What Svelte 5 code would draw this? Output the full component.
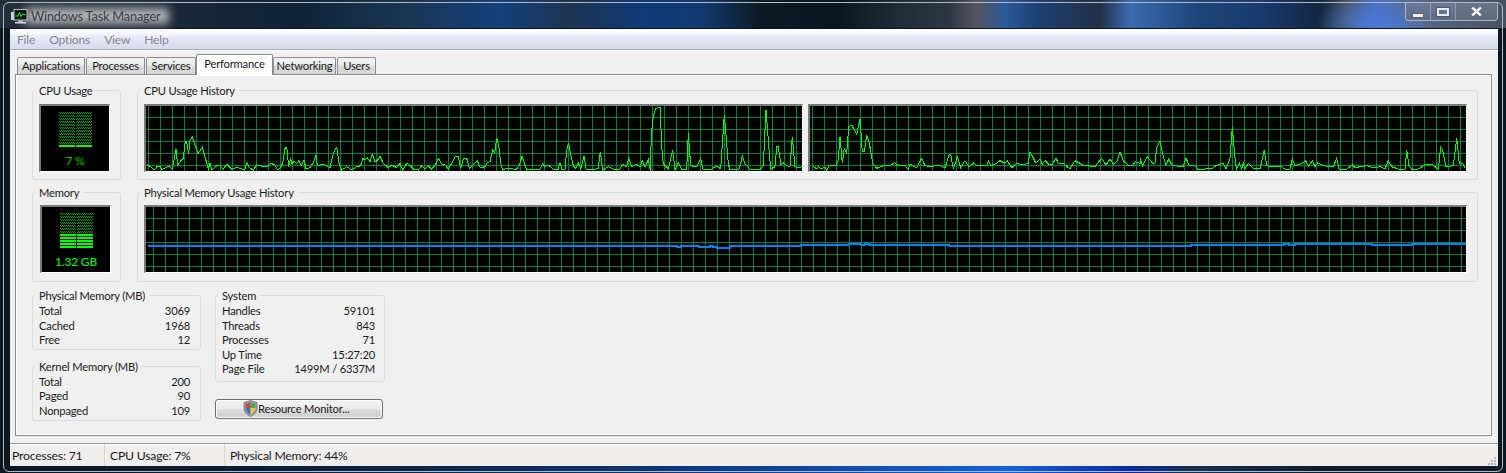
<script>
  // traces read off the reference, [zoomX, zoomY] at 3x, per crop offset
  const toLine = (crops, ox, oy) =>
    crops
      .flatMap(([off, pts]) =>
        pts.map(([x, y]) => `${(off + x / 3 - ox).toFixed(1)},${(95 + y / 3 - oy).toFixed(1)}`)
      )
      .join(" ");

  const cpu1 = [
    [140, [[22,208],[30,214],[42,225],[52,214],[60,214],[66,224],[78,218],[88,213],[96,222],[100,205],[108,163],[113,210],[120,200],[130,190],[136,140],[140,140],[146,176],[150,135],[157,127],[165,150],[175,175],[187,157],[195,185],[205,222],[210,205],[216,225],[230,212],[240,212],[250,222],[260,208],[275,222],[290,217],[305,222],[315,222],[320,203],[328,218],[340,225],[350,210],[370,215],[385,213],[392,205],[405,210],[412,225],[420,220],[428,205],[435,160],[440,157],[446,215],[452,190],[456,208],[462,198],[470,206],[476,197],[484,210],[492,195],[498,222],[510,218],[520,203],[528,180],[532,212],[548,208],[560,212],[570,218],[580,175],[590,157],[597,205],[605,225],[620,215],[635,225],[650,215],[662,212],[668,190],[675,195],[682,188],[690,200],[697,177],[705,200],[712,197],[720,184],[730,205],[745,218],[755,210],[770,218],[780,205],[788,225],[800,205],[808,210],[820,222],[835,225],[845,212],[855,222],[865,212],[875,222],[885,212],[895,190],[905,207],[915,210],[925,222],[935,205],[945,185],[955,185],[962,220],[970,192],[980,190],[988,220],[1000,210],[1012,198],[1020,215]]],
    [480, [[0,218],[15,215],[20,205],[30,200],[38,165],[44,175],[50,130],[56,150],[62,205],[68,225],[80,220],[100,222],[110,222],[118,212],[126,183],[132,200],[140,225],[160,222],[180,222],[188,207],[195,215],[205,210],[220,222],[235,222],[240,203],[246,225],[255,222],[260,165],[266,143],[272,180],[280,212],[288,220],[295,203],[302,222],[312,182],[318,222],[340,225],[355,220],[361,170],[368,225],[385,215],[400,222],[420,222],[427,208],[440,215],[446,190],[455,215],[470,208],[480,215],[487,197],[495,215],[505,195],[511,227],[514,120],[520,65],[527,40],[540,37],[546,165],[550,207],[565,222],[578,165],[585,225],[595,203],[605,222],[620,222],[625,115],[632,212],[650,215],[662,190],[668,222],[680,225],[695,222],[710,213],[722,222],[733,60],[738,120],[745,207],[750,225],[778,222],[787,183],[795,208],[810,222],[830,225],[842,222],[850,212],[858,45],[866,150],[872,222],[885,215],[890,155],[895,155],[903,210],[912,203],[920,212],[930,215],[937,125],[945,215],[955,218],[965,215]]]
  ];

  const cpu2 = [
    [800, [[38,212],[50,222],[55,215],[65,222],[75,216],[80,225],[88,212],[108,212],[115,195],[120,125],[127,205],[133,160],[140,175],[146,95],[155,90],[170,118],[180,72],[187,170],[193,170],[200,120],[208,145],[218,205],[230,220],[250,212],[270,212],[283,203],[295,212],[315,212],[325,222],[330,208],[350,218],[365,190],[375,212],[395,215],[415,210],[435,218],[447,180],[452,178],[460,222],[472,185],[482,218],[495,197],[507,215],[522,203],[530,212],[560,213],[565,197],[572,212],[590,205],[600,197],[615,205],[622,197],[635,218],[650,205],[665,210],[685,205],[690,170],[708,205],[720,192],[727,208],[735,197],[745,207],[757,207],[768,190],[775,205],[790,205],[810,222],[825,197],[840,205],[850,212],[865,212],[885,215],[905,190],[918,210],[930,192],[940,208],[950,200],[960,170],[970,198],[985,210],[1000,210],[1005,200],[1020,205]]],
    [1140, [[0,190],[8,212],[22,185],[38,205],[45,205],[50,158],[60,138],[70,185],[78,210],[86,192],[95,210],[110,213],[130,213],[138,190],[148,212],[165,212],[173,222],[195,222],[218,220],[228,212],[250,205],[258,222],[270,190],[277,97],[285,190],[290,222],[298,205],[305,222],[310,205],[315,222],[325,205],[340,220],[360,222],[373,165],[380,212],[395,215],[420,213],[435,222],[450,222],[457,192],[465,212],[485,205],[497,197],[505,215],[517,197],[525,215],[533,203],[550,212],[580,215],[590,190],[597,222],[620,222],[637,210],[645,218],[660,215],[680,212],[700,218],[720,215],[735,222],[745,197],[755,215],[775,222],[795,222],[800,165],[807,212],[815,222],[835,222],[855,210],[875,207],[885,215],[895,222],[902,157],[908,165],[918,215],[940,212],[950,130],[958,205],[968,205],[975,220]]]
  ];

  // physical memory: [x where the step ends, y]
  const memSteps = [[677,246],[681,247],[699,246],[710,247],[713,246],[717,247],[730,248],[801,246],[849,245],[861,244],[865,245],[869,244],[949,245],[1191,246],[1284,245],[1289,244],[1295,245],[1372,244],[1412,245],[1466,244]];
  let memLine = "2,140";
  {
    let pts = [[148, 246]];
    for (const [x, y] of memSteps) {
      pts.push([pts[pts.length - 1][0], y], [x, y]);
    }
    memLine = pts.map(([x, y]) => `${x - 146},${y - 207}`).join(" ");
  }

  const range = (from, to, step) => {
    const out = [];
    for (let v = from; v < to; v += step) out.push(v);
    return out;
  };

  const physical = [["Total", "3069"], ["Cached", "1968"], ["Free", "12"]];
  const kernel = [["Total", "200"], ["Paged", "90"], ["Nonpaged", "109"]];
  const system = [
    ["Handles", "59101"],
    ["Threads", "843"],
    ["Processes", "71"],
    ["Up Time", "15:27:20"],
    ["Page File", "1499M / 6337M"]
  ];
  const tabs = ["Applications", "Processes", "Services", "Performance", "Networking", "Users"];
  const menus = ["File", "Options", "View", "Help"];
</script>

{#snippet graph(w, h, gx, gy, children)}
  <div class="graph">
    <svg width={w} height={h} viewBox="0 0 {w} {h}" shape-rendering="crispEdges">
      <rect width={w} height={h} fill="#000" />
      {#each range(gx, w, 12) as x}
        <rect {x} y="0" width="1" height={h} fill="#008040" />
      {/each}
      {#each range(gy, h, 12) as y}
        <rect x="0" {y} width={w} height="1" fill="#008040" />
      {/each}
      {@render children()}
    </svg>
  </div>
{/snippet}

{#snippet meter(stripes, label, bright)}
  <div class="meter">
    <svg width="33" height="35" viewBox="0 0 33 35" shape-rendering="crispEdges">
      <defs>
        <pattern id="dots" width="2" height="3" patternUnits="userSpaceOnUse">
          <rect x="0" y="0" width="1" height="1" fill="#00a800" />
          <rect x="1" y="1" width="1" height="1" fill="#00a800" />
        </pattern>
      </defs>
      <rect x="0" y="0" width="16" height={35 - stripes * 3} fill="url(#dots)" />
      <rect x="17" y="0" width="16" height={35 - stripes * 3} fill="url(#dots)" />
      {#each range(0, stripes, 1) as i}
        <rect x="0" y={33 - i * 3} width="16" height="2" fill="#00ff00" />
        <rect x="17" y={33 - i * 3} width="16" height="2" fill="#00ff00" />
      {/each}
    </svg>
    <span class="meter-label" class:bright>{label}</span>
  </div>
{/snippet}

{#snippet stats(rows)}
  {#each rows as [name, value]}
    <div class="stat"><span>{name}</span><span>{value}</span></div>
  {/each}
{/snippet}

{#snippet cpuGraph()}
  <polyline points={toLine(cpu1, 146, 106)} fill="none" stroke="#00ff00" />
{/snippet}
{#snippet cpuGraph2()}
  <polyline points={toLine(cpu2, 810, 106)} fill="none" stroke="#00ff00" />
{/snippet}
{#snippet memGraph()}
  <polyline points={memLine} fill="none" stroke="#0080ff" stroke-width="2" />
{/snippet}

<div class="desktop">
  <div class="frame">
    <div class="titlebar">
      <div class="title">
        <svg width="17" height="15" viewBox="0 0 17 15">
          <rect x="0" y="3" width="3" height="8" fill="#cfd3d6" />
          <rect x="3" y="0.5" width="13" height="10.5" fill="#0c1a12" stroke="#b9bdc0" />
          <path d="M4.5 7 L7 7 L8.5 3.5 L10 7.5 L11.5 5 L14.5 6" fill="none" stroke="#35e04a" />
          <rect x="7" y="11" width="5" height="2" fill="#a9adb0" />
          <rect x="4" y="13" width="11" height="1.5" fill="#d7dadc" />
        </svg>
        <span>Windows Task Manager</span>
      </div>
      <div class="caption">
        <button class="cap min" aria-label="Minimize"><i></i></button>
        <button class="cap max" aria-label="Maximize"><i></i></button>
        <button class="cap close" aria-label="Close">
          <svg width="11" height="9" viewBox="0 0 11 9">
            <path d="M1.2 0.5 L9.8 8.5 M9.8 0.5 L1.2 8.5" stroke="#f2f4f6" stroke-width="2.4" fill="none" />
          </svg>
        </button>
      </div>
    </div>

    <div class="client">
      <div class="menubar">
        {#each menus as m}<span>{m}</span>{/each}
      </div>

      <div class="tabs">
        {#each tabs as t}
          <div class="tab" class:active={t === "Performance"}>{t}</div>
        {/each}
      </div>

      <div class="panel">
        <div class="row">
          <div class="group small">
            <div class="legend">CPU Usage</div>
            {@render meter(1, "7 %", false)}
          </div>
          <div class="group wide">
            <div class="legend">CPU Usage History</div>
            <div class="graphs">
              {@render graph(656, 65, 2, 11, cpuGraph)}
              {@render graph(656, 65, 2, 11, cpuGraph2)}
            </div>
          </div>
        </div>

        <div class="row">
          <div class="group small">
            <div class="legend">Memory</div>
            <div class="shift">{@render meter(5, "1.32 GB", true)}</div>
          </div>
          <div class="group wide">
            <div class="legend">Physical Memory Usage History</div>
            <div class="graphs mem">
              {@render graph(1320, 65, 7, 11, memGraph)}
            </div>
          </div>
        </div>

        <div class="lower">
          <div class="col">
            <div class="group stats">
              <div class="legend">Physical Memory (MB)</div>
              {@render stats(physical)}
            </div>
            <div class="group stats">
              <div class="legend">Kernel Memory (MB)</div>
              {@render stats(kernel)}
            </div>
          </div>
          <div class="col right">
            <div class="group stats system">
              <div class="legend">System</div>
              {@render stats(system)}
            </div>
            <button class="monitor">
              <svg width="15" height="17" viewBox="0 0 15 17">
                <path d="M7.5 0.5 L14 2.5 V8 C14 12 11 15 7.5 16.5 C4 15 1 12 1 8 V2.5 Z" fill="#9aa0a6" stroke="#6d7278" stroke-width="0.8" />
                <path d="M7.5 2.5 V8 H2.6 V3.8 Z" fill="#d8403a" />
                <path d="M7.5 2.5 L12.4 3.8 V8 H7.5 Z" fill="#4bb04a" />
                <path d="M2.6 8 H7.5 V14.4 C5 13.4 3 11 2.6 8 Z" fill="#3a6fd0" />
                <path d="M7.5 8 H12.4 C12 11 10 13.4 7.5 14.4 Z" fill="#f0c93a" />
              </svg>
              <span>Resource Monitor...</span>
            </button>
          </div>
        </div>
      </div>

      <div class="statusbar">
        <div class="cell first">Processes: 71</div>
        <div class="cell second">CPU Usage: 7%</div>
        <div class="cell">Physical Memory: 44%</div>
        <svg class="grip" width="9" height="9" viewBox="0 0 9 9" shape-rendering="crispEdges">
          <rect x="7" y="1" width="2" height="2" fill="#b5b5b5" />
          <rect x="4" y="4" width="2" height="2" fill="#b5b5b5" />
          <rect x="7" y="4" width="2" height="2" fill="#b5b5b5" />
          <rect x="1" y="7" width="2" height="2" fill="#b5b5b5" />
          <rect x="4" y="7" width="2" height="2" fill="#b5b5b5" />
          <rect x="7" y="7" width="2" height="2" fill="#b5b5b5" />
        </svg>
      </div>
    </div>
  </div>
</div>

<style>
  :global(body) {
    margin: 0;
    background: #0b1620;
  }

  .desktop {
    width: 1506px;
    height: 473px;
    box-sizing: border-box;
    padding: 2px 3px 1px;
    overflow: hidden;
    font: 11.2px Lato, "Open Sans", sans-serif;
    letter-spacing: -0.2px;
    color: #1a1a1a;
    background:
      radial-gradient(ellipse 60px 30px at 1375px 24px, #4a78d8 0%, rgba(74, 120, 216, 0) 100%),
      linear-gradient(90deg, #23303c 0, #1a2838 170px, #0f2338 300px, #1a3550 400px, #14407c 500px, #1e3450 570px, #0f3a78 640px, #123a70 700px, #0d1a25 760px, #0b1822 840px, #1e2c38 900px, #2e3844 950px, #55545e 976px, #2a5a98 1005px, #1e3f70 1040px, #233047 1100px, #3a6ab0 1130px, #1d4478 1200px, #1a3a70 1260px, #13263f 1320px, #4a5560 1350px, #4a6fc0 1375px, #5a6a8c 1410px, #46505f 1506px) 0 0 / 100% 28px no-repeat,
      linear-gradient(90deg, #0a1622 0, #0c2138 300px, #0c3068 600px, #1060e0 1010px, #0a2aa0 1130px, #143050 1190px, #0f1c2a 1340px, #0d1a26 1506px) 0 100% / 100% 7px no-repeat,
      #0c1722;
  }

  .frame {
    height: 100%;
    box-sizing: border-box;
    border: 1px solid #b4bac2;
    border-radius: 6px;
    display: flex;
    flex-direction: column;
  }

  .titlebar {
    height: 25px;
    display: flex;
    justify-content: space-between;
    align-items: flex-start;
    margin-right: 4px;
  }

  .title {
    display: flex;
    align-items: center;
    gap: 3px;
    margin: 5px 0 0 7px;
    font-size: 12.8px;
    color: #3c3f44;
    position: relative;
  }

  .title svg,
  .title span {
    position: relative;
  }

  /* blurred glass glow behind the caption text */
  .title::before {
    content: "";
    position: absolute;
    left: 14px;
    top: 0;
    width: 144px;
    height: 16px;
    background: #b4b6b8;
    filter: blur(5px);
  }

  .caption {
    display: flex;
    gap: 1px;
    height: 17px;
    border: 1px solid #aeb5c0;
    border-top: none;
    border-radius: 0 0 4px 4px;
    background: #8f98a8;
    overflow: hidden;
  }

  .cap {
    padding: 0;
    border: none;
    background: linear-gradient(#6b7a9c, #5d6b84);
    display: flex;
    align-items: center;
    justify-content: center;
  }

  .min { width: 24px; }
  .max { width: 24px; }
  .close { width: 41px; background: linear-gradient(#6a7484, #5f6a7b); }

  .min i {
    display: block;
    width: 10px;
    height: 3px;
    margin-top: 7px;
    background: #f2f4f6;
    border: 1px solid #5a6070;
    border-radius: 1px;
  }

  .max i {
    display: block;
    width: 8px;
    height: 4px;
    border: 2px solid #e8ecf0;
    outline: 1px solid #4e5868;
  }

  .client {
    flex: 1;
    min-height: 0;
    margin: 0 4px 5px 6px;
    display: flex;
    flex-direction: column;
    background: #f0f0f0;
    border-top: 1px solid #0c1420;
  }

  .menubar {
    height: 21px;
    box-sizing: border-box;
    padding-left: 7px;
    display: flex;
    gap: 14px;
    align-items: center;
    background: linear-gradient(#ffffff 0, #fdfdff 3px, #e6eaf6 8px, #d5dbee 100%);
    border-bottom: 1px solid #a8abb4;
    color: #85878e;
    box-shadow: 0 1px 0 #fff;
    font-size: 12.1px;
  }

  .tabs {
    display: flex;
    gap: 1px;
    height: 25px;
    box-sizing: border-box;
    padding: 4px 0 0 7px;
    align-items: flex-end;
    position: relative;
    z-index: 1;
    margin-bottom: -1px;
  }

  .tab {
    height: 17px;
    box-sizing: border-box;
    padding-top: 1px;
    text-align: center;
    border: 1px solid #898c95;
    border-bottom: none;
    border-radius: 2px 2px 0 0;
    background: linear-gradient(#f4f4f4, #ececec 45%, #dcdcdc 50%, #d6d6d6);
    white-space: nowrap;
    margin-bottom: 1px;
  }

  .tab:nth-child(1) { width: 68px; }
  .tab:nth-child(2) { width: 59px; }
  .tab:nth-child(3) { width: 50px; }
  .tab:nth-child(5) { width: 63px; }
  .tab:nth-child(6) { width: 39px; }

  .tab.active {
    width: 77px;
    height: 21px;
    background: #fff;
    padding-top: 2px;
    margin: 0 -1px;
    position: relative;
    z-index: 2;
  }

  .panel {
    height: 362px;
    margin: 0 6px 0 5px;
    box-sizing: border-box;
    border: 1px solid #898c95;
    box-shadow: inset 0 0 0 1px #fff;
    padding: 15px 13px 0 16px;
  }

  .row {
    display: flex;
    gap: 16px;
    margin-bottom: 12px;
  }

  .group {
    border: 1px solid #d5dfe5;
    border-radius: 3px;
    box-sizing: border-box;
  }

  .legend {
    width: fit-content;
    margin: -9px 0 0 2px;
    padding: 0 4px;
    height: 17px;
    line-height: 17px;
    background: #f0f0f0;
    white-space: nowrap;
  }

  .small {
    width: 89px;
    height: 90px;
  }

  .wide {
    flex: 1;
    height: 90px;
  }

  .small .meter { margin: 5px 0 0 6px; }
  .small .shift { margin-left: 1px; }
  .shift .meter { margin-top: 4px; }

  .meter {
    width: 71px;
    height: 68px;
    box-sizing: border-box;
    background: #000;
    border: 2px solid #7a7a7a;
    border-right: 1px solid #fff;
    border-bottom: 1px solid #fff;
    padding-top: 6px;
    display: flex;
    flex-direction: column;
    align-items: center;
  }

  .meter svg {
    display: block;
    flex: none;
  }

  .meter-label {
    margin-top: 6px;
    color: #00c000;
    font-size: 12px;
    line-height: 15px;
  }

  .meter-label.bright { color: #00ff00; }

  .graphs {
    display: flex;
    gap: 5px;
    margin: 5px 0 0 6px;
  }

  .graphs.mem { margin-top: 4px; }

  .graph {
    border: 2px solid #7a7a7a;
    border-right: 1px solid #fff;
    border-bottom: 1px solid #fff;
    line-height: 0;
  }

  .graph svg { display: block; }

  .lower {
    display: flex;
    gap: 14px;
    margin-top: 13px;
  }

  .col {
    display: flex;
    flex-direction: column;
    width: 169px;
    gap: 16px;
  }

  .col.right { width: 170px; }
  .col.right .stats { padding-right: 9px; }

  .stats {
    padding: 0 10px 1px 6px;
  }

  .stats.system { padding-bottom: 4px; }

  .stat {
    display: flex;
    justify-content: space-between;
    height: 14.6px;
    line-height: 14.6px;
    white-space: nowrap;
  }

  .stats .legend { margin-left: -4px; }

  .monitor {
    width: 168px;
    height: 20px;
    margin-top: 1px;
    padding: 0 0 0 27px;
    display: flex;
    align-items: center;
    font: inherit;
    letter-spacing: inherit;
    color: #1a1a1a;
    border: 1px solid #707070;
    border-radius: 3px;
    background: linear-gradient(#f2f2f2, #ebebeb 48%, #dddddd 52%, #cfcfcf);
    box-shadow: inset 0 0 0 1px #fcfcfc;
  }

  .monitor svg { flex: none; }

  .statusbar {
    margin-top: 7px;
    flex: 1;
    display: flex;
    align-items: center;
    position: relative;
    background: #f0eded;
    border-top: 1px solid #9a9a9a;
    box-shadow: inset 0 1px 0 #fff;
    font-size: 12.2px;
  }

  .cell {
    height: 100%;
    box-sizing: border-box;
    padding: 4px 0 0 5px;
    border-right: 1px solid #d8d6d6;
    white-space: nowrap;
  }

  .cell:last-of-type { border-right: none; }
  .first { width: 95px; padding-left: 2px; }
  .second { width: 120px; }

  .grip {
    position: absolute;
    right: 2px;
    bottom: 1px;
  }
</style>
